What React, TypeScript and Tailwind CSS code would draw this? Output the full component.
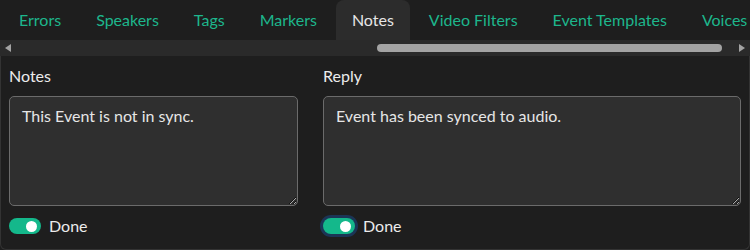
import React from "react";

const tabs = ["Errors", "Speakers", "Tags", "Markers", "Notes", "Video Filters", "Event Templates", "Voices"];

function Toggle({ focused }: { focused?: boolean }) {
  return (
    <div className={`relative flex h-[16px] w-[32px] shrink-0 items-center rounded-full bg-[#14b88b] ${focused ? "ring-[3px] ring-[#1b3556]" : ""}`}>
      <div className="absolute right-[4px] h-[11px] w-[11px] rounded-full bg-white" />
    </div>
  );
}

export default function App() {
  return (
    <div className="h-[250px] w-[750px] overflow-hidden bg-[#1e1e1e] text-[16px] text-[#ececec]" style={{ fontFamily: "Lato, 'Noto Sans', sans-serif" }}>
      <div className="flex h-[40px] gap-[3px] overflow-hidden whitespace-nowrap pl-[3px]">
        {tabs.map((t) => (
          <div
            key={t}
            className={`flex h-[40px] shrink-0 items-center px-4 ${t === "Notes" ? "rounded-t-[8px] bg-[#2c2c2c] text-[#e6e6e6]" : "text-[#1db68c]"}`}
          >
            {t}
          </div>
        ))}
      </div>
      <div className="relative flex h-[16px] items-center bg-[#2a2a2a]">
        <svg width="6" height="8" viewBox="0 0 6 8" className="ml-[5px]">
          <polygon points="6,0 6,8 0,4" fill="#a3a3a3" />
        </svg>
        <div className="ml-[366px] h-[8px] w-[345px] rounded-full bg-[#a3a3a3]" />
        <svg width="6" height="8" viewBox="0 0 6 8" className="ml-[17px]">
          <polygon points="0,0 0,8 6,4" fill="#a3a3a3" />
        </svg>
      </div>
      <div className="flex h-[194px] gap-[25px] rounded-b-[6px] border-x border-b border-[#333333] px-[8px] pt-[10px]">
        <div className="flex w-[289px] flex-col">
          <div className="h-[20px] leading-[20px]">Notes</div>
          <textarea
            className="mt-[10px] h-[110px] w-full resize-y rounded-[5px] border border-[#6b6b6b] bg-[#2f2f2f] px-[12px] py-[9px] leading-[20px] text-[#e6e6e6] outline-none [color-scheme:dark]"
            defaultValue="This Event is not in sync."
          />
          <div className="mt-[10px] flex items-center gap-[8px]">
            <Toggle />
            <span className="leading-[20px]">Done</span>
          </div>
        </div>
        <div className="flex flex-1 flex-col">
          <div className="h-[20px] leading-[20px]">Reply</div>
          <textarea
            className="mt-[10px] h-[110px] w-full resize-y rounded-[5px] border border-[#6b6b6b] bg-[#2f2f2f] px-[12px] py-[9px] leading-[20px] text-[#e6e6e6] outline-none [color-scheme:dark]"
            defaultValue="Event has been synced to audio."
          />
          <div className="mt-[10px] flex items-center gap-[8px]">
            <Toggle focused />
            <span className="leading-[20px]">Done</span>
          </div>
        </div>
      </div>
    </div>
  );
}
